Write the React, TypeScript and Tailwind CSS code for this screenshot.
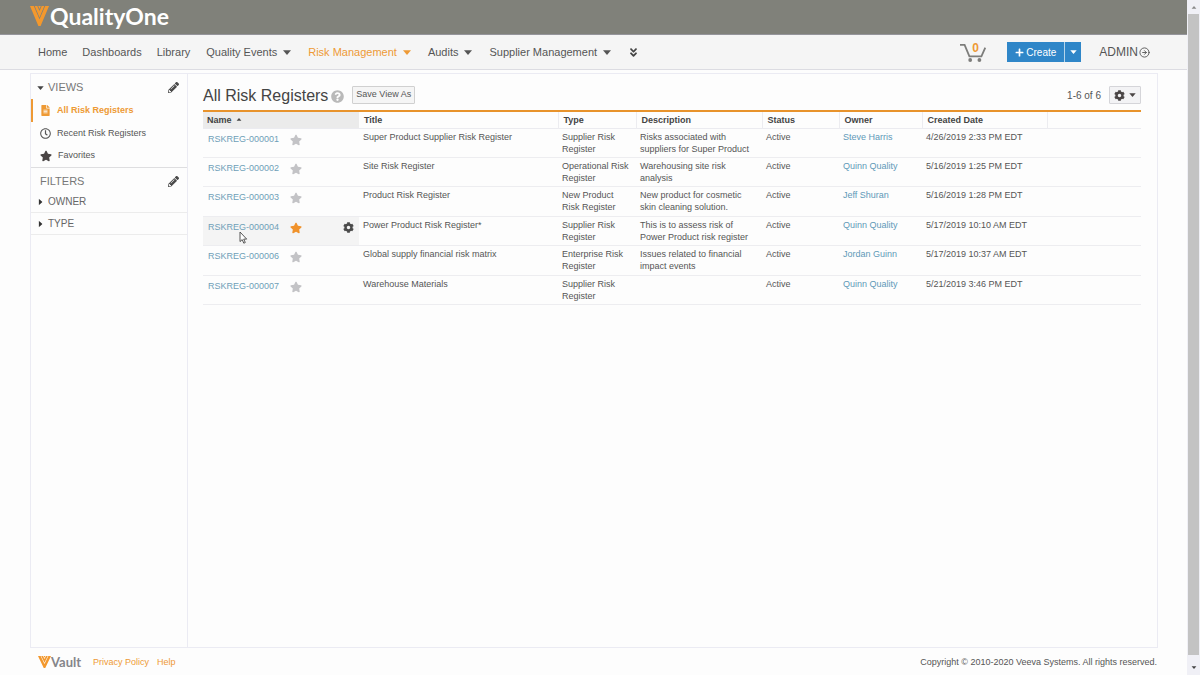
import { ReactNode } from 'react';
import {
  FaAngleDoubleDown,
  FaCog,
  FaFileAlt,
  FaPencilAlt,
  FaPlus,
  FaQuestionCircle,
  FaRegClock,
  FaStar,
} from 'react-icons/fa';
import { LuCircleArrowRight } from 'react-icons/lu';
import clsx from 'clsx';

interface RiskRegister {
  name: string;
  title: string;
  type: string;
  description: string;
  owner: string;
  created: string;
  favorite?: boolean;
  hovered?: boolean;
}

const registers: RiskRegister[] = [
  {
    name: 'RSKREG-000001',
    title: 'Super Product Supplier Risk Register',
    type: 'Supplier Risk Register',
    description: 'Risks associated with suppliers for Super Product',
    owner: 'Steve Harris',
    created: '4/26/2019 2:33 PM EDT',
  },
  {
    name: 'RSKREG-000002',
    title: 'Site Risk Register',
    type: 'Operational Risk Register',
    description: 'Warehousing site risk analysis',
    owner: 'Quinn Quality',
    created: '5/16/2019 1:25 PM EDT',
  },
  {
    name: 'RSKREG-000003',
    title: 'Product Risk Register',
    type: 'New Product Risk Register',
    description: 'New product for cosmetic skin cleaning solution.',
    owner: 'Jeff Shuran',
    created: '5/16/2019 1:28 PM EDT',
  },
  {
    name: 'RSKREG-000004',
    title: 'Power Product Risk Register*',
    type: 'Supplier Risk Register',
    description: 'This is to assess risk of Power Product risk register',
    owner: 'Quinn Quality',
    created: '5/17/2019 10:10 AM EDT',
    favorite: true,
    hovered: true,
  },
  {
    name: 'RSKREG-000006',
    title: 'Global supply financial risk matrix',
    type: 'Enterprise Risk Register',
    description: 'Issues related to financial impact events',
    owner: 'Jordan Guinn',
    created: '5/17/2019 10:37 AM EDT',
  },
  {
    name: 'RSKREG-000007',
    title: 'Warehouse Materials',
    type: 'Supplier Risk Register',
    description: '',
    owner: 'Quinn Quality',
    created: '5/21/2019 3:46 PM EDT',
  },
];

const columns = ['Title', 'Type', 'Description', 'Status', 'Owner', 'Created Date'];

// Down-pointing wedge used by menus and section toggles
function Caret({ className }: { className?: string }) {
  return (
    <svg viewBox="0 0 8 5" className={clsx('fill-current', className)} aria-hidden="true">
      <path d="M0 0.3h8L4 5z" />
    </svg>
  );
}

function VeevaMark({ className }: { className?: string }) {
  return (
    <svg viewBox="0 0 19 20" preserveAspectRatio="none" className={className} fill="#f3982d" aria-hidden="true">
      <path d="M0 0h3.8l5.7 13.2L15.2 0H19l-8.4 20H8.4z" />
      <path d="M4.7 0h2.6l2.2 5 2.2-5h2.6L9.5 11.4z" />
      <path d="M8.2 0h2.6L9.5 3z" />
    </svg>
  );
}

function CartIcon() {
  return (
    <svg viewBox="0 0 26 20" className="h-5 w-[26px]" fill="none" stroke="#7d7d7b" strokeWidth="1.8" aria-hidden="true">
      <path d="M0 2.9h4.6L9.4 14.4h12L25.3 5.6" />
      <circle cx="10.2" cy="18" r="1.9" fill="#7d7d7b" stroke="none" />
      <circle cx="19.4" cy="18" r="1.9" fill="#7d7d7b" stroke="none" />
    </svg>
  );
}

function NavItem({ children, menu, active }: { children: ReactNode; menu?: boolean; active?: boolean }) {
  return (
    <a href="#" className={clsx('flex items-center gap-[6px]', active ? 'text-[#ee9a35]' : 'text-[#555]')}>
      {children}
      {menu && <Caret className="h-[5px] w-2" />}
    </a>
  );
}

function Sidebar() {
  return (
    <aside className="w-[157px] shrink-0 border-r border-[#ebebf3] text-[#555]">
      <div className="flex h-[25px] items-center justify-between pt-[2px] pr-2 pl-[6px]">
        <button className="flex items-center gap-1 text-[11px] text-[#777]">
          <Caret className="h-1 w-[7px] text-[#444]" />
          VIEWS
        </button>
        <button aria-label="Edit views">
          <FaPencilAlt className="size-[11px] text-[#4a4a4a]" />
        </button>
      </div>
      <nav className="border-b border-[#dedee0] text-[9px]">
        <a
          href="#"
          className="flex h-[23px] items-center gap-[6px] border-l-2 border-[#ee9a35] pl-[7px] font-bold text-[#ee9a35]"
        >
          <FaFileAlt className="size-[11px]" />
          All Risk Registers
        </a>
        <a href="#" className="flex h-[23px] items-center gap-[6px] border-l-2 border-transparent pl-[7px]">
          <FaRegClock className="size-[11px]" />
          Recent Risk Registers
        </a>
        <a href="#" className="flex h-[22px] items-center gap-[6px] border-l-2 border-transparent pl-[7px]">
          <FaStar className="size-3 text-[#4a4545]" />
          Favorites
        </a>
      </nav>
      <div className="flex h-[23px] items-center justify-between pt-[3px] pr-2 pl-[9px]">
        <h2 className="text-[11px] text-[#777]">FILTERS</h2>
        <button aria-label="Edit filters">
          <FaPencilAlt className="size-[11px] text-[#4a4a4a]" />
        </button>
      </div>
      {['OWNER', 'TYPE'].map((filter) => (
        <button
          key={filter}
          className="flex h-[22px] w-full items-center gap-1 border-b border-[#ececec] pl-[6px] text-[10px] text-[#666]"
        >
          <Caret className="h-1 w-[7px] -rotate-90 text-[#333]" />
          {filter}
        </button>
      ))}
    </aside>
  );
}

function RegisterTable() {
  return (
    <table className="h-[195px] w-full table-fixed border-t-2 border-[#e8932c] text-left text-[9px] leading-3 text-[#555]">
      <colgroup>
        <col className="w-[156px]" />
        <col className="w-[199px]" />
        <col className="w-[78px]" />
        <col className="w-[126px]" />
        <col className="w-[77px]" />
        <col className="w-[83px]" />
        <col className="w-[125px]" />
        <col />
      </colgroup>
      <thead>
        <tr className="h-[17px] border-b border-[#ebebf0] text-[#444]">
          <th className="bg-[#ebebeb] px-1 font-bold">
            <button className="flex items-center gap-1">
              Name
              <Caret className="h-[3px] w-[6px] rotate-180" />
            </button>
          </th>
          {columns.map((column, i) => (
            <th key={column} className={clsx('px-[5px] font-bold', i > 0 && 'border-l border-[#ececf0]')}>
              {column}
            </th>
          ))}
          <td className="border-l border-[#ececf0]" />
        </tr>
      </thead>
      <tbody>
        {registers.map((row) => (
          <tr key={row.name} className="border-b border-[#ededf0] align-top">
            <td className={clsx('px-[5px] pt-[3px]', row.hovered && 'bg-[#f4f4f4]')}>
              <div className="flex items-center">
                <a href="#" className="w-[82px] text-[#6f9fb8]">
                  {row.name}
                </a>
                <button aria-label={`Favorite ${row.name}`} className="pt-[2px]">
                  <FaStar className={clsx('size-3', row.favorite ? 'text-[#f0922b]' : 'text-[#c3c3c6]')} />
                </button>
                {row.hovered && (
                  <button aria-label="Row actions" className="ml-auto pt-[2px]">
                    <FaCog className="size-[11px] text-[#4a4a4a]" />
                  </button>
                )}
              </div>
            </td>
            <td className="px-1 pt-[2px]">{row.title}</td>
            <td className="px-1 pt-[2px]">{row.type}</td>
            <td className="px-1 pt-[2px]">{row.description}</td>
            <td className="px-1 pt-[2px]">Active</td>
            <td className="px-1 pt-[2px]">
              <a href="#" className="text-[#6099b8]">
                {row.owner}
              </a>
            </td>
            <td className="px-1 pt-[2px] whitespace-nowrap">{row.created}</td>
            <td />
          </tr>
        ))}
      </tbody>
    </table>
  );
}

function ScrollBar() {
  return (
    <div className="flex w-[13px] shrink-0 flex-col items-center bg-[#f0f0f6]">
      <div className="flex h-[14px] items-center">
        <Caret className="h-[3px] w-[6px] rotate-180 text-[#8a8a8a]" />
      </div>
      <div className="w-[11px] flex-1 bg-[#c3c3c3]" />
      <div className="flex h-5 items-center pt-[5px]">
        <Caret className="h-[3px] w-[6px] text-[#444]" />
      </div>
    </div>
  );
}

export default function App() {
  return (
    <div className="flex min-h-screen bg-[#fdfdfd] font-['Liberation_Sans',Arial,sans-serif]">
      <div className="flex min-w-0 flex-1 flex-col">
        <header className="flex h-[35px] items-center gap-[1px] border-b border-[#95959b] bg-[#80817a] pb-[2px] pl-[30px]">
          <VeevaMark className="h-5 w-[19px]" />
          <span className="font-['Lato',sans-serif] text-[23px] leading-6 font-bold text-white">QualityOne</span>
        </header>

        <div className="flex h-[35px] items-center justify-between border-b border-[#dcdce2] bg-[#f5f5f5] pr-[37px] pl-[38px] text-[11px]">
          <nav className="flex items-center">
            <div className="flex items-center gap-[15px]">
              <NavItem>Home</NavItem>
              <NavItem>Dashboards</NavItem>
              <NavItem>Library</NavItem>
            </div>
            <div className="ml-4 flex items-center gap-[17px]">
              <NavItem menu>Quality Events</NavItem>
              <NavItem menu active>
                Risk Management
              </NavItem>
              <NavItem menu>Audits</NavItem>
              <NavItem menu>Supplier Management</NavItem>
              <button aria-label="More tabs">
                <FaAngleDoubleDown className="size-[11px] text-[#444]" />
              </button>
            </div>
          </nav>
          <div className="flex items-center text-[#555]">
            <button aria-label="Cart" className="relative mr-[21px]">
              <CartIcon />
              <span className="absolute top-0 left-3 text-[12px] leading-3 font-bold text-[#ee9a35]">0</span>
            </button>
            <div className="mr-[18px] flex h-5 text-[10px] text-white">
              <button className="flex w-[57px] items-center justify-center gap-[2px] bg-[#2f86c8]">
                <FaPlus className="size-[9px]" />
                Create
              </button>
              <button aria-label="Create options" className="flex w-[17px] items-center justify-center border-l border-[#b5d5ea] bg-[#2f86c8]">
                <Caret className="h-1 w-[7px]" />
              </button>
            </div>
            <a href="#" className="flex items-center gap-[1px] text-[12px]">
              ADMIN
              <LuCircleArrowRight className="size-[11px]" />
            </a>
          </div>
        </div>

        <div className="mt-[3px] mr-[29px] ml-[30px] flex flex-1 border border-[#ebebf3]">
          <Sidebar />
          <main className="min-w-0 flex-1 pt-[10px] pr-4 pl-[15px]">
            <div className="flex h-[26px] items-center pb-1">
              <h1 className="pt-[2px] text-[16px] leading-5 text-[#444]">All Risk Registers</h1>
              <FaQuestionCircle className="mt-[2px] ml-[3px] size-[13px] text-[#b9b9b9]" />
              <button className="ml-2 h-[18px] rounded-[1px] border border-[#d0d0d0] bg-[#f5f5f5] px-[3px] text-[9px] text-[#555]">
                Save View As
              </button>
              <span className="ml-auto text-[10px] text-[#555]">1-6 of 6</span>
              <button
                aria-label="List settings"
                className="ml-2 flex h-[18px] w-8 items-center justify-center gap-1 rounded-[1px] border border-[#d5d5d9] bg-[#f3f3f5] text-[#4a4545]"
              >
                <FaCog className="size-[11px]" />
                <Caret className="h-1 w-[7px]" />
              </button>
            </div>
            <RegisterTable />
          </main>
        </div>

        <footer className="flex h-[27px] items-center justify-between pr-[30px] pl-[38px] text-[9px] text-[#555]">
          <div className="flex items-center">
            <VeevaMark className="h-3 w-[13px]" />
            <span className="font-['Lato',sans-serif] text-[13px] leading-4 font-bold text-[#85858a]">Vault</span>
            <a href="#" className="mt-[3px] ml-3 text-[#ee9a35]">
              Privacy Policy
            </a>
            <a href="#" className="mt-[3px] ml-2 text-[#ee9a35]">
              Help
            </a>
          </div>
          <p className="mt-[3px]">Copyright © 2010-2020 Veeva Systems. All rights reserved.</p>
        </footer>
      </div>
      <ScrollBar />

      {/* Mouse pointer over the hovered row */}
      <svg viewBox="0 0 9 13" className="absolute top-[231px] left-[239px] h-[13px] w-[9px]" aria-hidden="true">
        <path d="M1 1v9.6l2.2-2 1.6 3.6 1.5-.7-1.6-3.4h3z" fill="#fff" stroke="#444" strokeWidth="0.9" />
      </svg>
    </div>
  );
}
